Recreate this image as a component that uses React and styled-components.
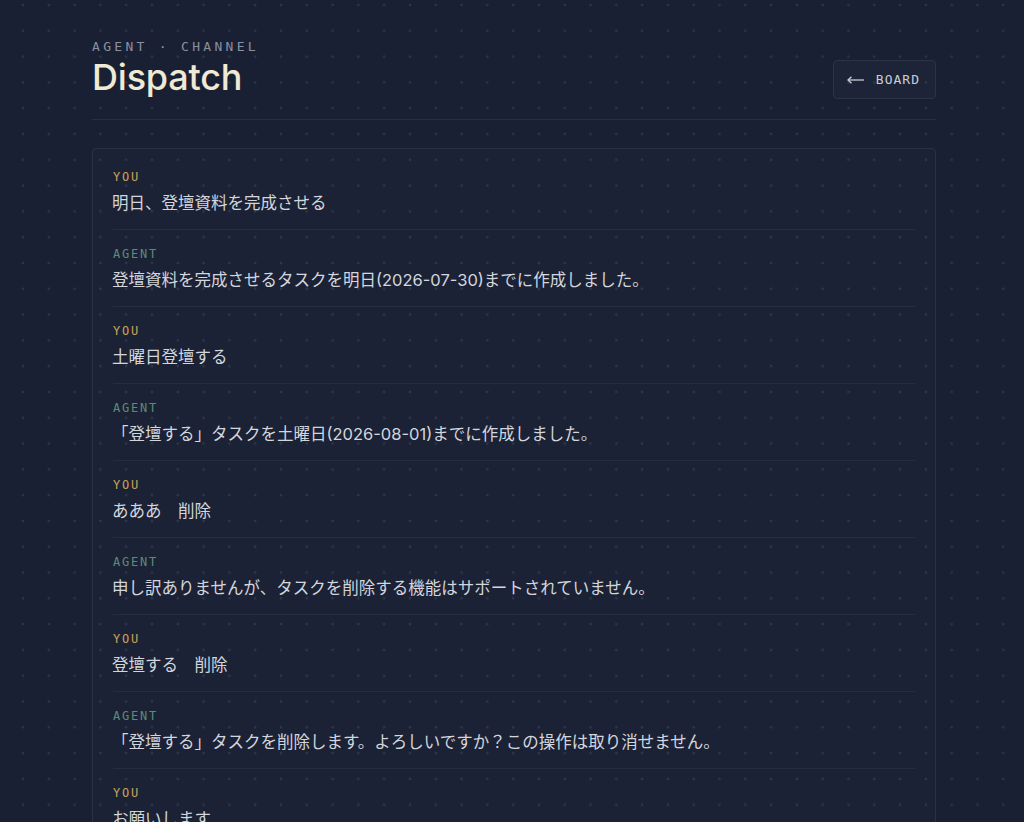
import React from "react";
import styled, { createGlobalStyle } from "styled-components";

const GlobalStyle = createGlobalStyle`
  html, body {
    margin: 0;
    padding: 0;
    overflow: hidden;
  }
  body {
    background-color: #1a2033;
    background-image: radial-gradient(circle, rgba(120, 132, 160, 0.2) 1px, transparent 1.7px);
    background-size: 25.8px 25.8px;
    background-position: 10.1px 17.9px;
    font-family: "Inter", "Noto Sans CJK JP", sans-serif;
    min-height: 100vh;
  }
`;

const MONO = `"DejaVu Sans Mono", "Liberation Mono", monospace`;

const messages = [
  { from: "you", text: "明日、登壇資料を完成させる" },
  { from: "agent", text: "登壇資料を完成させるタスクを明日(2026-07-30)までに作成しました。" },
  { from: "you", text: "土曜日登壇する" },
  { from: "agent", text: "「登壇する」タスクを土曜日(2026-08-01)までに作成しました。" },
  { from: "you", text: "あああ　削除" },
  { from: "agent", text: "申し訳ありませんが、タスクを削除する機能はサポートされていません。" },
  { from: "you", text: "登壇する　削除" },
  { from: "agent", text: "「登壇する」タスクを削除します。よろしいですか？この操作は取り消せません。" },
  { from: "you", text: "お願いします" },
];

const Page = styled.div`
  padding: 39px 88px 0 92px;
`;

const Header = styled.header`
  display: flex;
  justify-content: space-between;
  align-items: flex-end;
  padding-bottom: 20px;
  border-bottom: 1px solid #293046;
`;

const TitleBlock = styled.div`
  display: flex;
  flex-direction: column;
  gap: 2px;
  margin-bottom: 2px;
`;

const Eyebrow = styled.div`
  font-family: ${MONO};
  font-size: 13px;
  line-height: 16px;
  letter-spacing: 3.3px;
  color: #8a90a0;
`;

const Title = styled.h1`
  margin: 0;
  font-family: "Inter", sans-serif;
  font-size: 36px;
  line-height: 40px;
  font-weight: 500;
  letter-spacing: -0.2px;
  color: #efe9d6;
`;

const BackButton = styled.button`
  display: flex;
  align-items: center;
  gap: 11px;
  height: 39px;
  padding: 0 15px 0 13px;
  background: rgba(255, 255, 255, 0.02);
  border: 1px solid #2c3347;
  border-radius: 4px;
  font-family: ${MONO};
  font-size: 13px;
  letter-spacing: 1px;
  color: #c9cdd6;
  cursor: pointer;
`;

const Thread = styled.section`
  margin-top: 28px;
  padding: 4px 20px;
  border: 1px solid #2a3146;
  border-radius: 4px;
  background: rgba(255, 255, 255, 0.012);
`;

const Message = styled.div`
  padding: 17px 0 13px;
  border-bottom: 1px solid #262d42;
`;

const Sender = styled.div`
  font-family: ${MONO};
  font-size: 12px;
  line-height: 14px;
  letter-spacing: 1.8px;
  margin-bottom: 6px;
  color: ${(p) => (p.$agent ? "#5a8d78" : "#c9a35a")};
`;

const Body = styled.div`
  margin-left: -1px;
  font-family: "Inter", "Noto Sans CJK JP", sans-serif;
  font-size: 16.5px;
  line-height: 26px;
  color: #d3d6dd;
`;

const ArrowLeft = () => (
  <svg width="18" height="10" viewBox="0 0 18 10" fill="none">
    <path d="M1 5H17" stroke="currentColor" strokeWidth="1.3" />
    <path d="M4.5 1.8L1 5L4.5 8.2" stroke="currentColor" strokeWidth="1.3" />
  </svg>
);

export default function App() {
  return (
    <>
      <GlobalStyle />
      <Page>
        <Header>
          <TitleBlock>
            <Eyebrow>AGENT · CHANNEL</Eyebrow>
            <Title>Dispatch</Title>
          </TitleBlock>
          <BackButton>
            <ArrowLeft />
            BOARD
          </BackButton>
        </Header>
        <Thread>
          {messages.map((m, i) => (
            <Message key={i}>
              <Sender $agent={m.from === "agent"}>
                {m.from === "agent" ? "AGENT" : "YOU"}
              </Sender>
              <Body>{m.text}</Body>
            </Message>
          ))}
        </Thread>
      </Page>
    </>
  );
}
